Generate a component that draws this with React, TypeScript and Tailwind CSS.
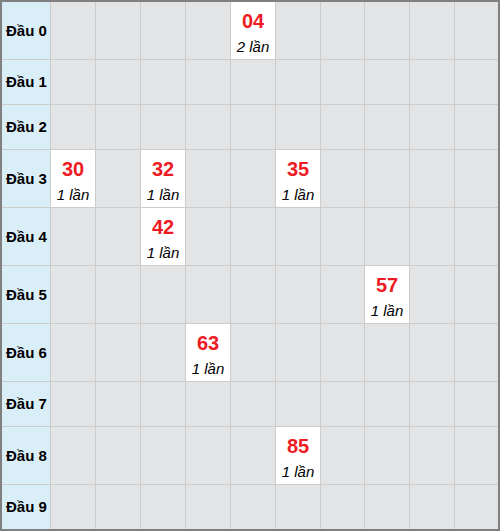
import React from "react";

const rows: { label: string; entries: Record<number, [string, string]> }[] = [
  { label: "Đầu 0", entries: { 4: ["04", "2 lần"] } },
  { label: "Đầu 1", entries: {} },
  { label: "Đầu 2", entries: {} },
  { label: "Đầu 3", entries: { 0: ["30", "1 lần"], 2: ["32", "1 lần"], 5: ["35", "1 lần"] } },
  { label: "Đầu 4", entries: { 2: ["42", "1 lần"] } },
  { label: "Đầu 5", entries: { 7: ["57", "1 lần"] } },
  { label: "Đầu 6", entries: { 3: ["63", "1 lần"] } },
  { label: "Đầu 7", entries: {} },
  { label: "Đầu 8", entries: { 5: ["85", "1 lần"] } },
  { label: "Đầu 9", entries: {} },
];

export default function App() {
  return (
    <div
      className="w-[500px] h-[531px] border-2 border-[#808080] bg-[#cccccc] grid gap-px grid-cols-[48px_44px_44px_44px_44px_44px_44px_43px_44px_44px_43px] grid-rows-[57px_44px_44px_57px_57px_57px_57px_44px_57px_44px]"
      style={{ fontFamily: '"Liberation Sans", Arial, sans-serif' }}
    >
      {rows.map((r) => (
        <React.Fragment key={r.label}>
          <div className="bg-[#daeef7] flex items-center pl-[4px] pt-[1px] text-[15px] font-bold text-black whitespace-nowrap">
            {r.label}
          </div>
          {Array.from({ length: 10 }).map((_, i) => {
            const e = r.entries[i];
            if (!e) return <div key={i} className="bg-[#e3e4e6]" />;
            return (
              <div key={i} className="bg-white flex flex-col items-center pt-[9px]">
                <div className="text-[20px] leading-[20px] font-bold text-[#ed1c24]">{e[0]}</div>
                <div className="mt-[6px] text-[15px] leading-[20px] italic text-black whitespace-nowrap">{e[1]}</div>
              </div>
            );
          })}
        </React.Fragment>
      ))}
    </div>
  );
}
